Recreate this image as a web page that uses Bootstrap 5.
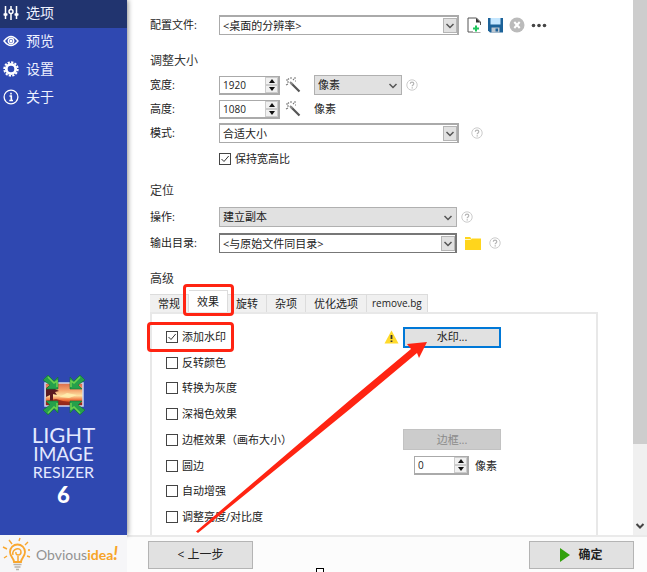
<!DOCTYPE html>
<html lang="zh-CN">
<head>
<meta charset="utf-8">
<meta name="viewport" content="width=device-width, initial-scale=1">
<title>Light Image Resizer 6</title>
<link href="https://cdn.jsdelivr.net/npm/bootstrap@5.3.0/dist/css/bootstrap.min.css" rel="stylesheet">
<style>
body{font-family:"Open Sans","Noto Sans CJK SC",sans-serif;font-size:11px;line-height:16px;color:#222;background:#fff}
.side{width:127px;background:#2f48b1;z-index:1;box-shadow:1px 0 5px rgba(0,0,0,.45)}
.side-link{height:28px;padding:0 0 2px 3px;gap:7px;font-size:14px;line-height:20px;color:#eef1ff;text-decoration:none}
.side-link.active{background:#21346f}
.brand{font-family:Lato,sans-serif;color:#e4e9ff;text-align:center;padding-bottom:26px}
.brand-a{font-size:22px;line-height:21px}
.brand-b{font-size:19px;line-height:18px}
.brand-c{font-size:16px;line-height:18px}
.brand-d{font-size:22px;line-height:28px;font-weight:900;color:#fff}
.settings{padding:13px 35px 0 23px}
.line{height:24px}
.line-label{width:69px;flex:none}
.section{height:24px;line-height:24px;font-size:12px;margin:0;font-weight:400;color:#333}
.gap-l{margin-top:12px}
.gap-s{margin-top:2px}
.combo{position:relative;height:20px;width:240px}
.combo select{appearance:none;width:100%;height:100%;border:1px solid #aaa;border-width:2px 2px 1px 1px;border-radius:0;background:#fff;padding:0 24px 0 3px;font-size:11px;line-height:16px;color:#222}
.combo svg{position:absolute;right:2px;top:3px;width:14px;height:15px;background:#e1e1e1;border:1px solid #b5b5b5;pointer-events:none}
.combo.dim select{background:#e1e1e1;border:1px solid #b0b0b0}
.combo.dim svg{border-color:transparent}
.combo.strong select{border-color:#777}
.combo.mid{width:238px}
.combo.short{width:88px}
.spin{height:19px;width:61px;border:1px solid #aaa;border-width:1px 2px 2px 1px;background:#fff}
.spin.slim{width:55px}
.spin input{appearance:textfield;-moz-appearance:textfield;width:0;flex:1;border:0;padding:0 0 0 3px;font-size:10px;line-height:14px;color:#222;background:none}
.spin input::-webkit-inner-spin-button{appearance:none;margin:0}
.spin-keys{width:13px}
.spin-keys button{flex:1;min-height:0;border:1px solid #ccc;background:#f0f0f0;padding:0;line-height:0}
.spin-keys svg{display:block;margin:auto}
.tick{appearance:none;width:12px;height:12px;border:1px solid #444;background:#fff;margin:0;flex:none}
.tick:checked{background:#fff url("data:image/svg+xml,%3Csvg xmlns='http://www.w3.org/2000/svg' viewBox='0 0 10 10'%3E%3Cpath d='M1.5 5l2.5 2.5L8.700 2' fill='none' stroke='%23333'/%3E%3C/svg%3E")}
.plain{border:0;background:none;padding:0;line-height:0}
.tabs{margin-top:3px;height:18px}
.tab-key{border:1px solid #dcdcdc;border-width:1px 1px 0 0;background:#f0f0f0;padding:0 8px;font-size:11px;line-height:17px;height:18px;color:#222;white-space:nowrap}
.tab-key.latin{font-size:10px;padding:0 5px}
.tab-key.active{background:#fff;height:22px;position:relative}
.ring{position:absolute;border:3px solid #ff2412;border-radius:4px;pointer-events:none;z-index:2}
.ring-tab{inset:-7px -7px -4px -6px}
.ring-check{inset:-7px -8px -7px -19px}
.pane{border:2px solid #e8e8e8;border-bottom:0;padding:12px 0 7px 14px}
.fx{display:grid;grid-template-columns:218px 19px auto;height:22px;align-items:center}
.fx label,.check{display:flex;align-items:center;gap:4px;justify-self:start;position:relative}
.push{border:1px solid #b4b4b4;background:#e1e1e1;font-size:11px;line-height:16px;color:#222;padding:0 8px}
.push.small-key{width:98px;height:21px}
.push.focused{border:2px solid #0078d7}
.push:disabled{background:#ccc;border-color:#c2c2c2;color:#8a8a8a}
.push.large-key{width:105px;height:28px;font-size:12px}
.radius{padding-left:11px;gap:6px}
.tools{gap:6px}
.scroll{width:14px;background:#f0f0f0}
.thumb{flex:0 0 83%;background:#cdcdcd}
.foot{height:37px}
.foot-logo{width:127px;background:#f6f6f8;gap:5px;font-family:Lato,sans-serif;font-size:14px;color:#929292;padding-left:2px;z-index:1}
.foot-logo b{color:#f7a428}
.foot-logo i{font-size:18px}
.foot-bar{border-top:2px solid #eaeaea;background:#fcfcfc;padding:0 13px 0 21px}
.handle{position:absolute;left:316px;bottom:-5px;width:8px;height:9px;border:1px solid #000;background:#fff;z-index:3}
.pointer{position:absolute;left:0;top:0;pointer-events:none;z-index:3}
</style>
<script src="https://cdn.jsdelivr.net/npm/bootstrap@5.3.0/dist/js/bootstrap.bundle.min.js"></script>
</head>
<body>
<svg class="d-none">
<symbol id="chev" viewBox="0 0 12 13"><path d="M2.500 5l3.500 3.500L9.500 5" fill="none" stroke="#555" stroke-width="1.500"/></symbol>
<symbol id="up" viewBox="0 0 6 4"><path d="M0 4l3-4 3 4z" fill="#111"/></symbol>
<symbol id="down" viewBox="0 0 6 4"><path d="M0 0l3 4 3-4z" fill="#111"/></symbol>
<symbol id="help" viewBox="0 0 12 12"><circle cx="6" cy="6" r="5.200" fill="none" stroke="#ccc"/><path d="M4.300 4.800c0-2.200 3.500-2.200 3.500 0C7.800 6 6.200 5.900 6.200 7.300M6.200 8.200v1.200" fill="none" stroke="#b5b5b5" stroke-width="1.200"/></symbol>
<symbol id="wand" viewBox="0 0 16 16"><path d="M6 6l8.500 8.500" stroke="#555" stroke-width="2.200"/><path d="M5 5l2.500 2.500" stroke="#888" stroke-width="2"/><path d="M1 3h2M5 1h2M9 1h2M3 1.500l1 1M8 3l1-1M1 8l2-1M2 5h2M10 4h1" stroke="#777" stroke-width="1.100"/></symbol>
</svg>
<div class="d-flex flex-column vh-100 position-relative overflow-hidden">
<div class="d-flex flex-grow-1">
<nav class="side d-flex flex-column flex-shrink-0">
<a href="#" class="side-link active d-flex align-items-center"><svg width="16" height="16" viewBox="0 0 16 16" fill="none" stroke="#fff" stroke-width="1.500"><path d="M2.500 1v13M8 1v3M8 9v6M13.500 1v13"/><circle cx="8" cy="6.500" r="2"/><path d="M.5 9.500h4M11.500 9.500h4M2.500 8v3M13.500 8v3" stroke-width="2"/></svg>选项</a>
<a href="#" class="side-link d-flex align-items-center"><svg width="16" height="16" viewBox="0 0 16 16" fill="none" stroke="#fff" stroke-width="1.400"><path d="M1 8q7-9 14 0q-7 9-14 0z"/><circle cx="8" cy="8" r="2.700"/><circle cx="8" cy="8" r=".8" fill="#fff"/></svg>预览</a>
<a href="#" class="side-link d-flex align-items-center"><svg width="16" height="16" viewBox="0 0 16 16" fill="none" stroke="#fff"><circle cx="8" cy="8" r="4.700" stroke-width="2.800"/><circle cx="8" cy="8" r="6.700" stroke-width="2" stroke-dasharray="2.200 1.300"/></svg>设置</a>
<a href="#" class="side-link d-flex align-items-center"><svg width="16" height="16" viewBox="0 0 16 16" fill="none" stroke="#fff"><circle cx="8" cy="8" r="6.900" stroke-width="1.300"/><path d="M6.500 7h1.800v4.500M6.300 11.500h3.700M8 3.800v1.700" stroke-width="1.600"/></svg>关于</a>
<div class="brand mt-auto">
<svg class="d-block mx-auto mb-2" width="42" height="42" viewBox="0 0 42 42"><defs><linearGradient id="sun" x2="0" y2="1"><stop offset="0" stop-color="#d9694a"/><stop offset=".3" stop-color="#f3a06a"/><stop offset=".55" stop-color="#fde0a0"/><stop offset=".75" stop-color="#ee6a35"/><stop offset="1" stop-color="#a32a1c"/></linearGradient></defs><path d="M2 9h38v23H2z" fill="url(#sun)" stroke="#cdd4ef" stroke-width="1.500"/><path d="M3 14l3-2 3 1 4-2 2 3-3 1 4 2-4 1 2 3-4-1 0 8H7v-7l-4 2z" fill="#5a1a20"/><path d="M3 27l10-2 7 2 8 1 11 1v2H3z" fill="#8c2219" opacity=".8"/><path d="M16 23l8-4 10 2-8 3z" fill="#fff0b0" opacity=".8"/><g fill="#25a04b" stroke="#127338" stroke-width=".6"><path id="corner" d="M0 6l5-5 6 6 4-4v12H3l4-4z"/><use href="#corner" transform="matrix(-1 0 0 1 42 0)"/><use href="#corner" transform="matrix(1 0 0 -1 0 42)"/><use href="#corner" transform="matrix(-1 0 0 -1 42 42)"/></g><path d="M5 3l6 6 3-2v6M37 3l-6 6-3-2v6M5 39l6-6 3 2v-6M37 39l-6-6-3 2v-6" fill="none" stroke="#6fd04f" stroke-width="1.500"/></svg>
<div class="brand-a">LIGHT</div><div class="brand-b">IMAGE</div><div class="brand-c">RESIZER</div><div class="brand-d">6</div>
</div>
</nav>
<main class="settings flex-grow-1 d-flex flex-column">
<div class="line d-flex align-items-center"><label class="line-label" for="profile">配置文件:</label><div class="combo"><select id="profile"><option>&lt;桌面的分辨率&gt;</option></select><svg><use href="#chev"/></svg></div>
<div class="tools d-flex ms-2"><button class="plain" aria-label="新建"><svg width="15" height="16" viewBox="0 0 15 16"><path d="M1 1h8.500L13.500 5v10H1z" fill="#fff" stroke="#555"/><path d="M9 1v4.500h4.500z" fill="#333"/><path d="M6 8h8v7H6z" fill="#fff"/><path d="M9 8.500v6M6 11.500h6" stroke="#1ec75d" stroke-width="2"/></svg></button><button class="plain" aria-label="保存"><svg width="15" height="16" viewBox="0 0 15 16"><path d="M0 1h15v14.500H2L0 13.500z" fill="#1c6299"/><path d="M2.500 1h10v6.500h-10z" fill="#c5e7ff"/><path d="M3.500 10.500h8v5h-8z" fill="#bcc6cf"/><path d="M7.500 11.500h2.500v3H7.500z" fill="#1c6299"/></svg></button><button class="plain" aria-label="删除"><svg width="16" height="16" viewBox="0 0 16 16"><circle cx="8" cy="8" r="7.500" fill="#bbb"/><path d="M5.300 5l5.400 6M10.700 5l-5.400 6" stroke="#fff" stroke-width="2"/></svg></button><button class="plain" aria-label="更多"><svg width="16" height="16" viewBox="0 0 16 16" fill="#444"><circle cx="2.500" cy="8.500" r="1.800"/><circle cx="8" cy="8.500" r="1.800"/><circle cx="13.500" cy="8.500" r="1.800"/></svg></button></div></div>
<h2 class="section gap-l">调整大小</h2>
<div class="line d-flex align-items-center"><label class="line-label" for="w">宽度:</label><div class="spin d-flex"><input id="w" type="number" value="1920"><span class="spin-keys d-flex flex-column"><button aria-label="增加"><svg width="6" height="4"><use href="#up"/></svg></button><button aria-label="减少"><svg width="6" height="4"><use href="#down"/></svg></button></span></div><svg class="ms-1 me-2" width="18" height="16"><use href="#wand"/></svg><div class="combo short dim ms-1"><select aria-label="单位"><option>像素</option></select><svg><use href="#chev"/></svg></div><svg class="ms-1" width="12" height="12"><use href="#help"/></svg></div>
<div class="line d-flex align-items-center"><label class="line-label" for="h">高度:</label><div class="spin d-flex"><input id="h" type="number" value="1080"><span class="spin-keys d-flex flex-column"><button aria-label="增加"><svg width="6" height="4"><use href="#up"/></svg></button><button aria-label="减少"><svg width="6" height="4"><use href="#down"/></svg></button></span></div><svg class="ms-1 me-2" width="18" height="16"><use href="#wand"/></svg><span class="ms-1">像素</span></div>
<div class="line d-flex align-items-center"><label class="line-label" for="mode">模式:</label><div class="combo"><select id="mode"><option>合适大小</option></select><svg><use href="#chev"/></svg></div><svg class="ms-2" width="20" height="12"><use href="#help"/></svg></div>
<div class="line gap-s d-flex align-items-center"><span class="line-label"></span><label class="check"><input type="checkbox" class="tick" checked>保持宽高比</label></div>
<h2 class="section mt-2">定位</h2>
<div class="line gap-s d-flex align-items-center"><label class="line-label" for="act">操作:</label><div class="combo mid dim"><select id="act"><option>建立副本</option></select><svg><use href="#chev"/></svg></div><svg class="ms-1" width="12" height="12"><use href="#help"/></svg></div>
<div class="line gap-s d-flex align-items-center"><label class="line-label" for="out">输出目录:</label><div class="combo mid strong"><select id="out"><option>&lt;与原始文件同目录&gt;</option></select><svg><use href="#chev"/></svg></div><button class="plain ms-2" aria-label="浏览"><svg width="16" height="13" viewBox="0 0 16 13"><path d="M0 0h5l1.500 1.500H16V13H0z" fill="#ffd51c"/><path d="M0 2.500h5.500L7 1.200" stroke="#fff6c9" fill="none"/></svg></button><svg class="ms-2" width="12" height="12"><use href="#help"/></svg></div>
<h2 class="section gap-l">高级</h2>
<div class="tabs d-flex align-items-end" role="tablist"><button class="tab-key" role="tab">常规</button><button class="tab-key active" role="tab" aria-selected="true">效果<span class="ring ring-tab"></span></button><button class="tab-key" role="tab">旋转</button><button class="tab-key" role="tab">杂项</button><button class="tab-key" role="tab">优化选项</button><button class="tab-key latin" role="tab">remove.bg</button></div>
<div class="pane flex-grow-1 d-flex flex-column justify-content-between">
<div class="fx"><label><input type="checkbox" class="tick" checked>添加水印<span class="ring ring-check"></span></label><svg width="15" height="14" viewBox="0 0 15 14"><path d="M7.500.5L14.500 13.500H.5z" fill="#ffda2b"/><path d="M7.500 5v4M7.500 10.500v1.500" stroke="#333" stroke-width="1.800"/></svg><button class="push small-key focused">水印...</button></div>
<div class="fx"><label><input type="checkbox" class="tick">反转颜色</label></div>
<div class="fx"><label><input type="checkbox" class="tick">转换为灰度</label></div>
<div class="fx"><label><input type="checkbox" class="tick">深褐色效果</label></div>
<div class="fx"><label><input type="checkbox" class="tick">边框效果（画布大小）</label><span></span><button class="push small-key" disabled>边框...</button></div>
<div class="fx"><label><input type="checkbox" class="tick">圆边</label><span></span><div class="radius d-flex align-items-center"><div class="spin slim d-flex"><input id="r" type="number" value="0"><span class="spin-keys d-flex flex-column"><button aria-label="增加"><svg width="6" height="4"><use href="#up"/></svg></button><button aria-label="减少"><svg width="6" height="4"><use href="#down"/></svg></button></span></div><label for="r">像素</label></div></div>
<div class="fx"><label><input type="checkbox" class="tick">自动增强</label></div>
<div class="fx"><label><input type="checkbox" class="tick">调整亮度/对比度</label></div>
</div>
</main>
<div class="scroll d-flex flex-column justify-content-between flex-shrink-0"><div class="thumb"></div><svg class="mx-auto mb-1" width="12" height="10" viewBox="0 0 12 10"><path d="M2.500 3L6 6.500 9.500 3" fill="none" stroke="#444" stroke-width="2"/></svg></div>
</div>
<footer class="foot d-flex flex-shrink-0">
<div class="foot-logo d-flex align-items-center flex-shrink-0"><svg width="29" height="34" viewBox="0 0 29 34" fill="none" stroke="#f9a72f" stroke-width="1.800"><path d="M12 25c0-4-4-5-4-10a7.500 7.500 0 0 1 15 0c0 5-4 6-4 10z"/><path d="M11 18c-2-6 8-9 8-3 0 4-6 4-5 0M16 19v6" stroke-width="1.500"/><path d="M11.500 27.500h8M12.500 30h6M14 32.500h3" stroke="#b9b3ab" stroke-width="1.500"/><path d="M18 1l-1 3M7 3l3 4M26 5l-3 3M1 10l4 2M2 21l3-2M28 20l-3-1M28 13l-2 0" stroke-width="1.400"/></svg><span>Obvious<b>idea<i>!</i></b></span></div>
<div class="foot-bar flex-grow-1 d-flex align-items-center justify-content-between"><button class="push large-key">&lt; 上一步</button><button class="push large-key fw-bold d-flex align-items-center justify-content-center gap-2"><svg width="10" height="14" viewBox="0 0 10 14"><path d="M0 0l10 7-10 7z" fill="#32a10c"/></svg>确定</button></div>
</footer>
<span class="handle"></span>
<svg class="pointer" width="647" height="572" viewBox="0 0 647 572"><path d="M196 531.500L350 400 411 349 407 344 427 342 419 358 417 353 350 409 198 533z" fill="#ff2412"/></svg>
</div>
</body>
</html>
